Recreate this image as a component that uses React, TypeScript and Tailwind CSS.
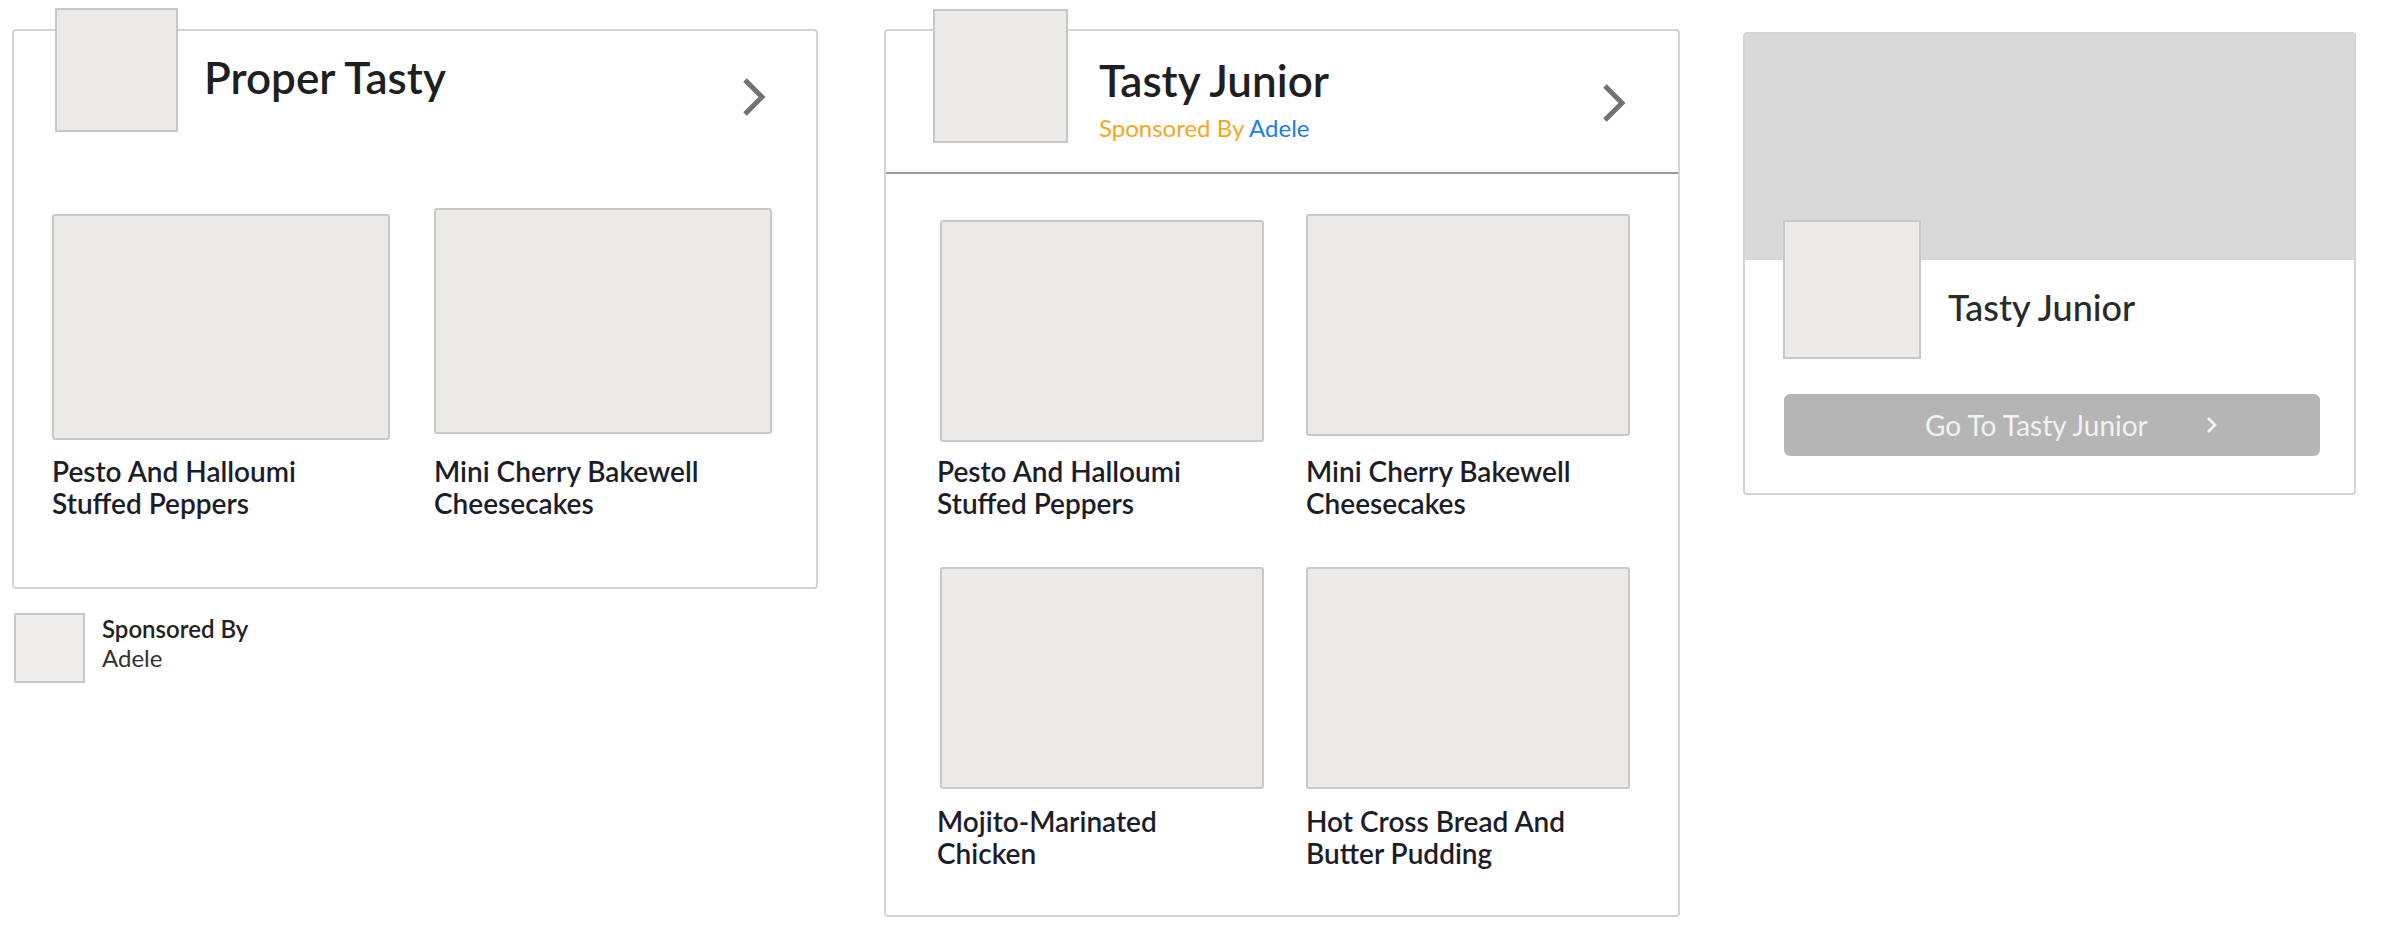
import React from "react";

const font = { fontFamily: "Lato, 'Open Sans', sans-serif" };

function Chevron({ className }: { className?: string }) {
  return (
    <svg className={className} width="24" height="38" viewBox="0 0 24 38" fill="none">
      <polyline points="3,2 20,19 3,36" stroke="#727272" strokeWidth="5" fill="none" />
    </svg>
  );
}

function Recipe({ title, imgClass, textClass }: { title: string[]; imgClass: string; textClass: string }) {
  return (
    <div className="flex flex-col">
      <div className={"rounded-[3px] border-2 border-[#c9c9c9] bg-[#ebeae8] " + imgClass} />
      <div className={"text-[28px] leading-[32px] font-semibold text-[#1c1d29] " + textClass}>
        <div>{title[0]}</div>
        <div>{title[1]}</div>
      </div>
    </div>
  );
}

export default function App() {
  return (
    <div className="w-[2392px] h-[930px] bg-white flex items-start pl-[12px] pt-[29px]" style={font}>
      {/* Card 1 column */}
      <div className="flex flex-col w-[806px]">
        <div className="h-[560px] border-2 border-[#d4d4d4] rounded-[4px] flex flex-col">
          <div className="flex items-start">
            <div className="ml-[41px] -mt-[23px] w-[123px] h-[124px] border-2 border-[#c8c8c8] bg-[#ecebe9]" />
            <div className="ml-[26px] mt-[22px] text-[44px] leading-[48px] font-semibold text-[#1f1f1f]">Proper Tasty</div>
            <Chevron className="ml-auto mt-[47px] mr-[50px]" />
          </div>
          <div className="flex pl-[38px] gap-[44px] mt-[76px]">
            <Recipe title={["Pesto And Halloumi", "Stuffed Peppers"]} imgClass="w-[338px] h-[226px] mt-[6px]" textClass="mt-[15px]" />
            <Recipe title={["Mini Cherry Bakewell", "Cheesecakes"]} imgClass="w-[338px] h-[226px] mb-[6px]" textClass="mt-[15px]" />
          </div>
        </div>
        <div className="flex items-start mt-[24px] ml-[2px]">
          <div className="w-[71px] h-[70px] border-2 border-[#c8c8c8] bg-[#eeedec]" />
          <div className="ml-[17px] mt-[1px] text-[24px] leading-[29px] text-[#222]">
            <div className="font-semibold">Sponsored By</div>
            <div className="text-[#333]">Adele</div>
          </div>
        </div>
      </div>

      {/* Card 2 */}
      <div className="ml-[66px] w-[796px] h-[888px] border-2 border-[#d4d4d4] rounded-[4px] flex flex-col">
        <div className="flex items-start h-[143px] border-b-2 border-[#9a9a9a]">
          <div className="ml-[47px] -mt-[22px] w-[135px] h-[134px] border-2 border-[#c8c8c8] bg-[#ecebe9]" />
          <div className="ml-[31px] mt-[25px] flex flex-col">
            <div className="text-[44px] leading-[48px] font-semibold text-[#1f1f1f]">Tasty Junior</div>
            <div className="mt-[10px] text-[24px] leading-[28px]">
              <span className="text-[#f5a623]">Sponsored By </span>
              <span className="text-[#1a7fe8]">Adele</span>
            </div>
          </div>
          <Chevron className="ml-auto mt-[53px] mr-[52px]" />
        </div>
        <div className="flex pl-[51px] gap-[42px] mt-[6px]">
          <Recipe title={["Pesto And Halloumi", "Stuffed Peppers"]} imgClass="ml-[3px] w-[324px] h-[222px] mt-[40px]" textClass="mt-[13px]" />
          <Recipe title={["Mini Cherry Bakewell", "Cheesecakes"]} imgClass="w-[324px] h-[222px] mt-[34px] mb-[6px]" textClass="mt-[13px]" />
        </div>
        <div className="flex pl-[51px] gap-[42px] mt-[48px]">
          <Recipe title={["Mojito-Marinated", "Chicken"]} imgClass="ml-[3px] w-[324px] h-[222px]" textClass="mt-[16px]" />
          <Recipe title={["Hot Cross Bread And", "Butter Pudding"]} imgClass="w-[324px] h-[222px]" textClass="mt-[16px]" />
        </div>
      </div>

      {/* Card 3 */}
      <div className="ml-[63px] mt-[3px] w-[613px] h-[463px] border-2 border-[#d4d4d4] rounded-[4px] flex flex-col overflow-hidden">
        <div className="h-[226px] bg-[#d8d8d8]" />
        <div className="flex items-start">
          <div className="ml-[38px] -mt-[40px] w-[138px] h-[139px] border-2 border-[#c8c8c8] bg-[#ecebe9]" />
          <div className="ml-[27px] mt-[27px] text-[36px] leading-[40px] font-medium text-[#2a2a2a]">Tasty Junior</div>
        </div>
        <div className="mt-[35px] ml-[39px] w-[536px] h-[62px] rounded-[6px] bg-[#b5b5b5] flex items-center pl-[141px] text-[28px] text-[#f2f2f2]">
          <span>Go To Tasty Junior</span>
          <svg className="ml-[58px]" width="12" height="16" viewBox="0 0 12 16" fill="none">
            <polyline points="2,1 9,8 2,15" stroke="#f5f5f5" strokeWidth="2.5" fill="none" />
          </svg>
        </div>
      </div>
    </div>
  );
}
